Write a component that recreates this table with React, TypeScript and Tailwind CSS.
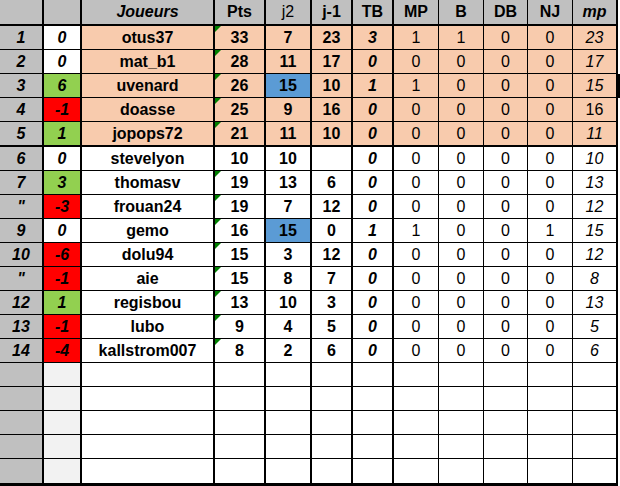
import React from "react";

type Row = {
  rank: string;
  diff: string;
  diffBg: string;
  name: string;
  vals: string[]; // Pts j2 j-1 TB MP B DB NJ mp
  blueJ2?: boolean;
  mpUpright?: boolean;
};

const rows: Row[] = [
  { rank: "1", diff: "0", diffBg: "bg-white", name: "otus37", vals: ["33", "7", "23", "3", "1", "1", "0", "0", "23"] },
  { rank: "2", diff: "0", diffBg: "bg-white", name: "mat_b1", vals: ["28", "11", "17", "0", "0", "0", "0", "0", "17"] },
  { rank: "3", diff: "6", diffBg: "bg-[#92d050]", name: "uvenard", vals: ["26", "15", "10", "1", "1", "0", "0", "0", "15"], blueJ2: true },
  { rank: "4", diff: "-1", diffBg: "bg-[#ff0000]", name: "doasse", vals: ["25", "9", "16", "0", "0", "0", "0", "0", "16"], mpUpright: true },
  { rank: "5", diff: "1", diffBg: "bg-[#92d050]", name: "jopops72", vals: ["21", "11", "10", "0", "0", "0", "0", "0", "11"] },
  { rank: "6", diff: "0", diffBg: "bg-white", name: "stevelyon", vals: ["10", "10", "", "0", "0", "0", "0", "0", "10"] },
  { rank: "7", diff: "3", diffBg: "bg-[#92d050]", name: "thomasv", vals: ["19", "13", "6", "0", "0", "0", "0", "0", "13"] },
  { rank: "\"", diff: "-3", diffBg: "bg-[#ff0000]", name: "frouan24", vals: ["19", "7", "12", "0", "0", "0", "0", "0", "12"] },
  { rank: "9", diff: "0", diffBg: "bg-white", name: "gemo", vals: ["16", "15", "0", "1", "1", "0", "0", "1", "15"], blueJ2: true },
  { rank: "10", diff: "-6", diffBg: "bg-[#ff0000]", name: "dolu94", vals: ["15", "3", "12", "0", "0", "0", "0", "0", "12"] },
  { rank: "\"", diff: "-1", diffBg: "bg-[#ff0000]", name: "aie", vals: ["15", "8", "7", "0", "0", "0", "0", "0", "8"] },
  { rank: "12", diff: "1", diffBg: "bg-[#92d050]", name: "regisbou", vals: ["13", "10", "3", "0", "0", "0", "0", "0", "13"] },
  { rank: "13", diff: "-1", diffBg: "bg-[#ff0000]", name: "lubo", vals: ["9", "4", "5", "0", "0", "0", "0", "0", "5"] },
  { rank: "14", diff: "-4", diffBg: "bg-[#ff0000]", name: "kallstrom007", vals: ["8", "2", "6", "0", "0", "0", "0", "0", "6"] },
];

const colBorder = [
  "border-r-2",
  "border-r-2",
  "border-r-2",
  "border-r-2",
  "border-r-2",
  "border-r-2",
  "border-r-2",
  "border-r",
  "border-r",
  "border-r",
  "border-r",
  "border-r-2",
];

function rowBorder(i: number) {
  // i: 0 header, 1..19 rows
  if (i === 0) return "border-b-2";
  if (i === 5) return "border-b-2";
  if (i === 19) return "border-b-[3px]";
  return "border-b";
}

function Cell({
  col,
  row,
  bg,
  weight,
  children,
  tri,
}: {
  col: number;
  row: number;
  bg: string;
  weight: string;
  children?: React.ReactNode;
  tri?: boolean;
}) {
  return (
    <div
      className={`relative flex items-center justify-center border-black ${colBorder[col]} ${rowBorder(row)} ${bg} ${weight}`}
    >
      {tri && (
        <span className="absolute left-0 top-0 h-0 w-0 border-t-[6px] border-r-[6px] border-t-[#008000] border-r-transparent" />
      )}
      <span className="leading-none">{children}</span>
    </div>
  );
}

const headerLabels: { t: string; w: string }[] = [
  { t: "", w: "font-bold" },
  { t: "", w: "font-bold" },
  { t: "Joueurs", w: "font-bold italic" },
  { t: "Pts", w: "font-bold" },
  { t: "j2", w: "font-normal" },
  { t: "j-1", w: "font-bold" },
  { t: "TB", w: "font-bold" },
  { t: "MP", w: "font-bold" },
  { t: "B", w: "font-bold" },
  { t: "DB", w: "font-bold" },
  { t: "NJ", w: "font-bold" },
  { t: "mp", w: "font-bold italic" },
];

const valWeight = [
  "font-bold",
  "font-bold",
  "font-bold",
  "font-bold italic",
  "font-normal",
  "font-normal",
  "font-normal",
  "font-normal",
  "italic",
];

export default function App() {
  const cells: React.ReactNode[] = [];

  // header
  headerLabels.forEach((h, c) => {
    cells.push(
      <Cell key={`h${c}`} col={c} row={0} bg="bg-[#c0c0c0]" weight={h.w}>
        {h.t}
      </Cell>
    );
  });
  cells.push(<div key="hx" className="bg-white" />);

  for (let r = 1; r <= 19; r++) {
    const d = rows[r - 1];
    const peach = r <= 5;
    const rowBg = peach ? "bg-[#f8cbad]" : "bg-white";
    cells.push(
      <Cell key={`r${r}c0`} col={0} row={r} bg="bg-[#c0c0c0]" weight="font-bold italic">
        {d ? d.rank : ""}
      </Cell>
    );
    cells.push(
      <Cell key={`r${r}c1`} col={1} row={r} bg={d ? d.diffBg : "bg-[#f2f2f2]"} weight="font-bold italic">
        {d ? d.diff : ""}
      </Cell>
    );
    cells.push(
      <Cell key={`r${r}c2`} col={2} row={r} bg={rowBg} weight="font-bold">
        {d ? d.name : ""}
      </Cell>
    );
    for (let v = 0; v < 9; v++) {
      const c = v + 3;
      let bg = rowBg;
      if (d && v === 1 && d.blueJ2) bg = "bg-[#5b9bd5]";
      let w = valWeight[v];
      if (d && v === 8 && d.mpUpright) w = "font-normal";
      cells.push(
        <Cell
          key={`r${r}c${c}`}
          col={c}
          row={r}
          bg={bg}
          weight={w}
          tri={!!d && v === 0 && r !== 6}
        >
          {d ? d.vals[v] : ""}
        </Cell>
      );
    }
    cells.push(<div key={`r${r}x`} className={r === 3 ? "bg-black" : "bg-white"} />);
  }

  return (
    <div className="h-[486px] w-[620px] overflow-hidden bg-white text-black">
      <div className="grid grid-cols-[44px_38px_133px_51px_46px_41px_41px_45px_45px_44px_45px_45px_2px] grid-rows-[26px_repeat(4,24px)_25px_repeat(13,24px)_27px] font-['Liberation_Sans',Arial,sans-serif] text-[16px]">
        {cells}
      </div>
    </div>
  );
}
